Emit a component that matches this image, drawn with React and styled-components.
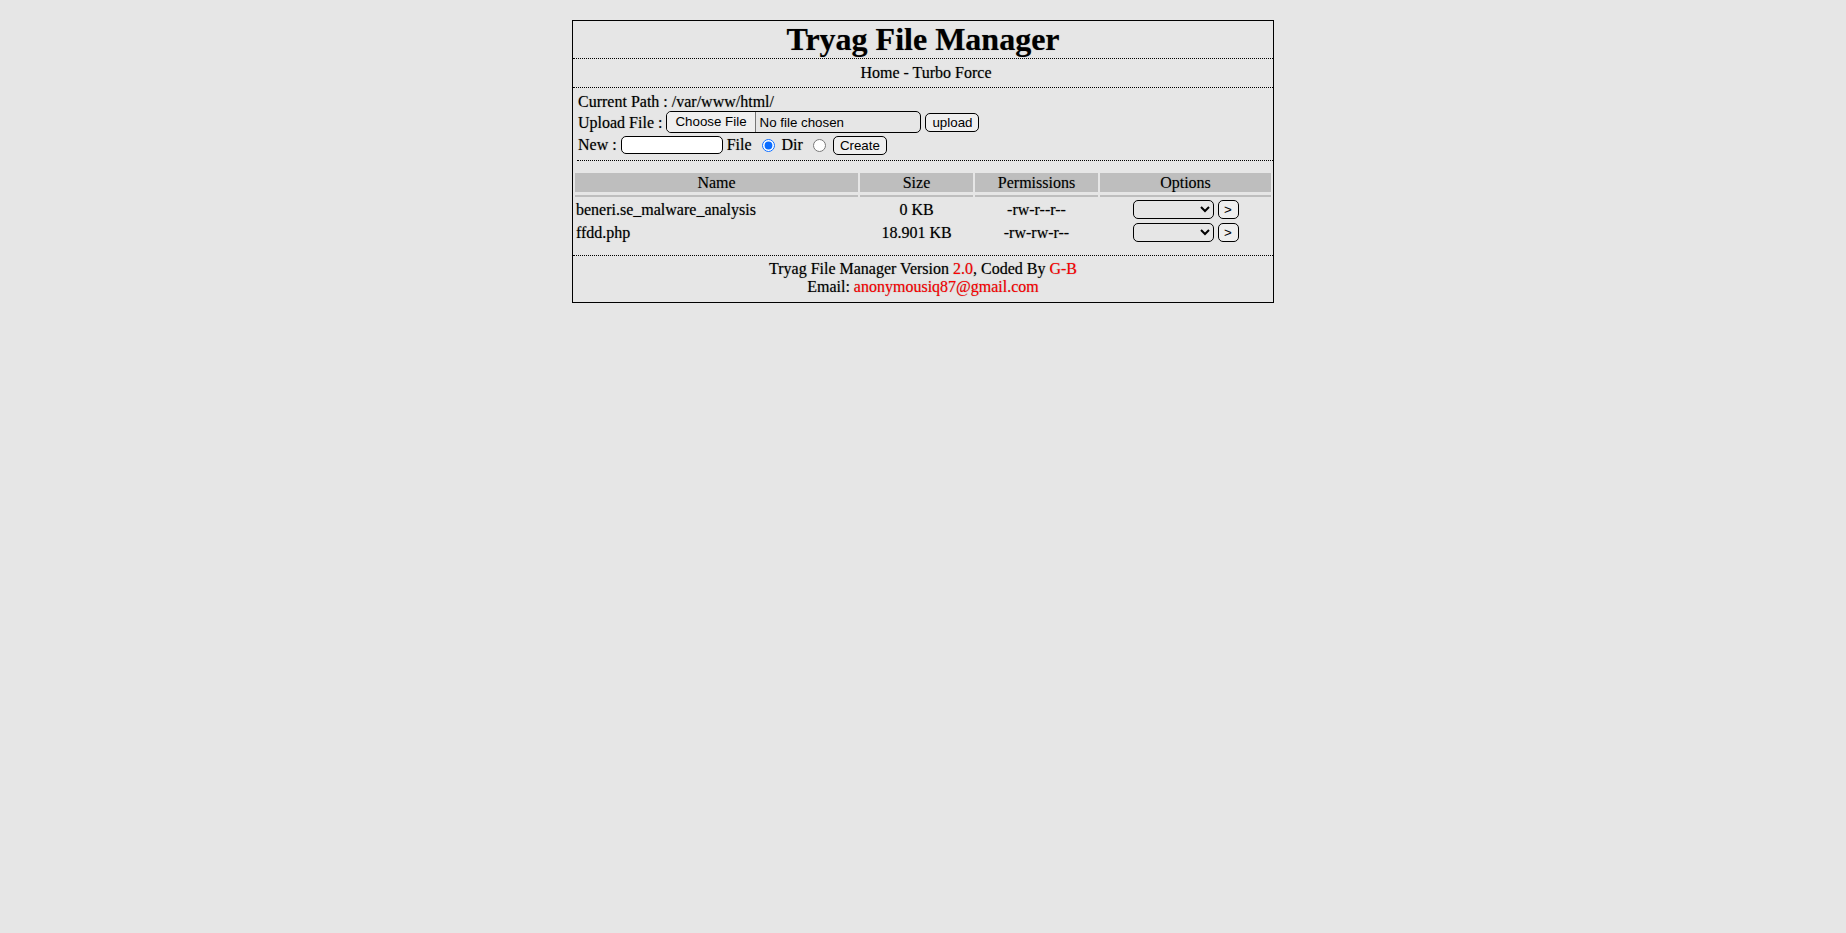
import React from 'react';
import styled, { createGlobalStyle } from 'styled-components';

const files = [
  { name: 'beneri.se_malware_analysis', size: '0 KB', perms: '-rw-r--r--' },
  { name: 'ffdd.php', size: '18.901 KB', perms: '-rw-rw-r--' },
];

export default function App() {
  return (
    <>
      <GlobalStyle />
      <Manager>
        <Title>Tryag File Manager</Title>
        <Nav>Home - Turbo Force</Nav>
        <Tools>
          <ToolRow $h={18}>Current Path : /var/www/html/</ToolRow>
          <ToolRow $h={23}>
            <span>Upload File :</span>
            <FileInput type="file" />
            <Button type="button">upload</Button>
          </ToolRow>
          <ToolRow $h={22}>
            <span>New :</span>
            <TextInput type="text" />
            <span>File</span>
            <Radio type="radio" name="kind" defaultChecked />
            <span>Dir</span>
            <Radio type="radio" name="kind" />
            <Button type="button">Create</Button>
          </ToolRow>
        </Tools>

        <FileTable>
          <colgroup>
            <col style={{ width: 283 }} />
            <col style={{ width: 113 }} />
            <col style={{ width: 123 }} />
            <col style={{ width: 171 }} />
          </colgroup>
          <thead>
            <tr>
              <HeadCell>Name</HeadCell>
              <HeadCell>Size</HeadCell>
              <HeadCell>Permissions</HeadCell>
              <HeadCell>Options</HeadCell>
            </tr>
            <tr>
              <RuleCell />
              <RuleCell />
              <RuleCell />
              <RuleCell />
            </tr>
          </thead>
          <tbody>
            {files.map((f) => (
              <tr key={f.name}>
                <Cell $align="left">{f.name}</Cell>
                <Cell>{f.size}</Cell>
                <Cell>{f.perms}</Cell>
                <Cell>
                  <OptionBox>
                    <Select defaultValue="">
                      <option value=""></option>
                      <option value="delete">Delete</option>
                      <option value="chmod">Chmod</option>
                      <option value="rename">Rename</option>
                      <option value="edit">Edit</option>
                    </Select>
                    <Button type="button" $w={21}>&gt;</Button>
                  </OptionBox>
                </Cell>
              </tr>
            ))}
          </tbody>
        </FileTable>

        <Footer>
          Tryag File Manager Version <Red>2.0</Red>, Coded By <Red>G-B</Red>
          <br />
          Email: <Red>anonymousiq87@gmail.com</Red>
        </Footer>
      </Manager>
    </>
  );
}

const GlobalStyle = createGlobalStyle`
  html, body {
    margin: 0;
    background: #e6e6e6;
  }
  body {
    font-family: "Liberation Serif", "Times New Roman", serif;
    font-size: 16px;
    color: #000;
    text-shadow: 0 0 1px #8a8a8a;
  }
`;

const Manager = styled.div`
  width: 700px;
  margin: 20px auto 0;
  border: 1px solid #000;
`;

const Title = styled.h1`
  margin: 0;
  padding: 1px 0 1px;
  font-size: 32px;
  line-height: 35px;
  font-weight: bold;
  text-align: center;
  border-bottom: 1px dotted #000;
`;

const Nav = styled.div`
  padding: 5px 0 5px 6px;
  line-height: 18px;
  text-align: center;
  border-bottom: 1px dotted #000;
`;

const Tools = styled.div`
  margin-left: 4px;
  padding: 5px 0 4px 1px;
  border-bottom: 1px dotted #000;
`;

const ToolRow = styled.div`
  display: flex;
  align-items: center;
  gap: 4px;
  height: ${(p) => p.$h}px;
  line-height: 18px;
  white-space: nowrap;
`;

const controlFont = `
  font-family: "Liberation Sans", Arial, sans-serif;
  font-size: 13.33px;
  color: #000;
  border: 1px solid #000;
  border-radius: 5px;
  box-sizing: border-box;
  text-shadow: none;
`;

const FileInput = styled.input`
  ${controlFont}
  width: 255px;
  height: 22px;
  padding: 0;
  margin-bottom: 2px;
  background: transparent;
  &::file-selector-button {
    font: inherit;
    height: 20px;
    margin: 0 4px 0 0;
    padding: 0 8px;
    border: none;
    border-right: 1px solid #767676;
    border-radius: 4px 0 0 4px;
    background: #efefef;
    color: #000;
  }
`;

const TextInput = styled.input`
  ${controlFont}
  width: 102px;
  height: 18px;
  padding: 1px 2px;
  background: #fff;
`;

const Radio = styled.input`
  width: 13px;
  height: 13px;
  margin: 0 3px 0 6px;
  accent-color: #0a6cff;
`;

const Button = styled.button`
  ${controlFont}
  height: 19px;
  width: ${(p) => (p.$w ? `${p.$w}px` : 'auto')};
  padding: 0 ${(p) => (p.$w ? 0 : 6)}px;
  line-height: 15px;
  background: #efefef;
  cursor: pointer;
`;

const FileTable = styled.table`
  width: 700px;
  margin: 10px 0 10px;
  border-spacing: 2px;
  table-layout: fixed;
`;

const HeadCell = styled.th`
  height: 19px;
  padding: 0;
  font-weight: normal;
  line-height: 18px;
  background: #bebebe;
`;

const RuleCell = styled.td`
  height: 3px;
  padding: 0;
  border-top: 1px solid transparent;
  background: #bebebe;
  background-clip: padding-box;
  box-sizing: border-box;
`;

const Cell = styled.td`
  height: 21px;
  padding: 0 1px;
  line-height: 18px;
  text-align: ${(p) => p.$align || 'center'};
  white-space: nowrap;
`;

const OptionBox = styled.div`
  display: flex;
  justify-content: center;
  align-items: center;
  gap: 4px;
`;

const Select = styled.select`
  ${controlFont}
  width: 81px;
  height: 19px;
  padding: 0 2px;
  background-color: transparent;
`;

const Footer = styled.div`
  padding: 4px 0 7px;
  border-top: 1px dotted #000;
  line-height: 17.5px;
  text-align: center;
`;

const Red = styled.span`
  color: #ff0000;
`;
